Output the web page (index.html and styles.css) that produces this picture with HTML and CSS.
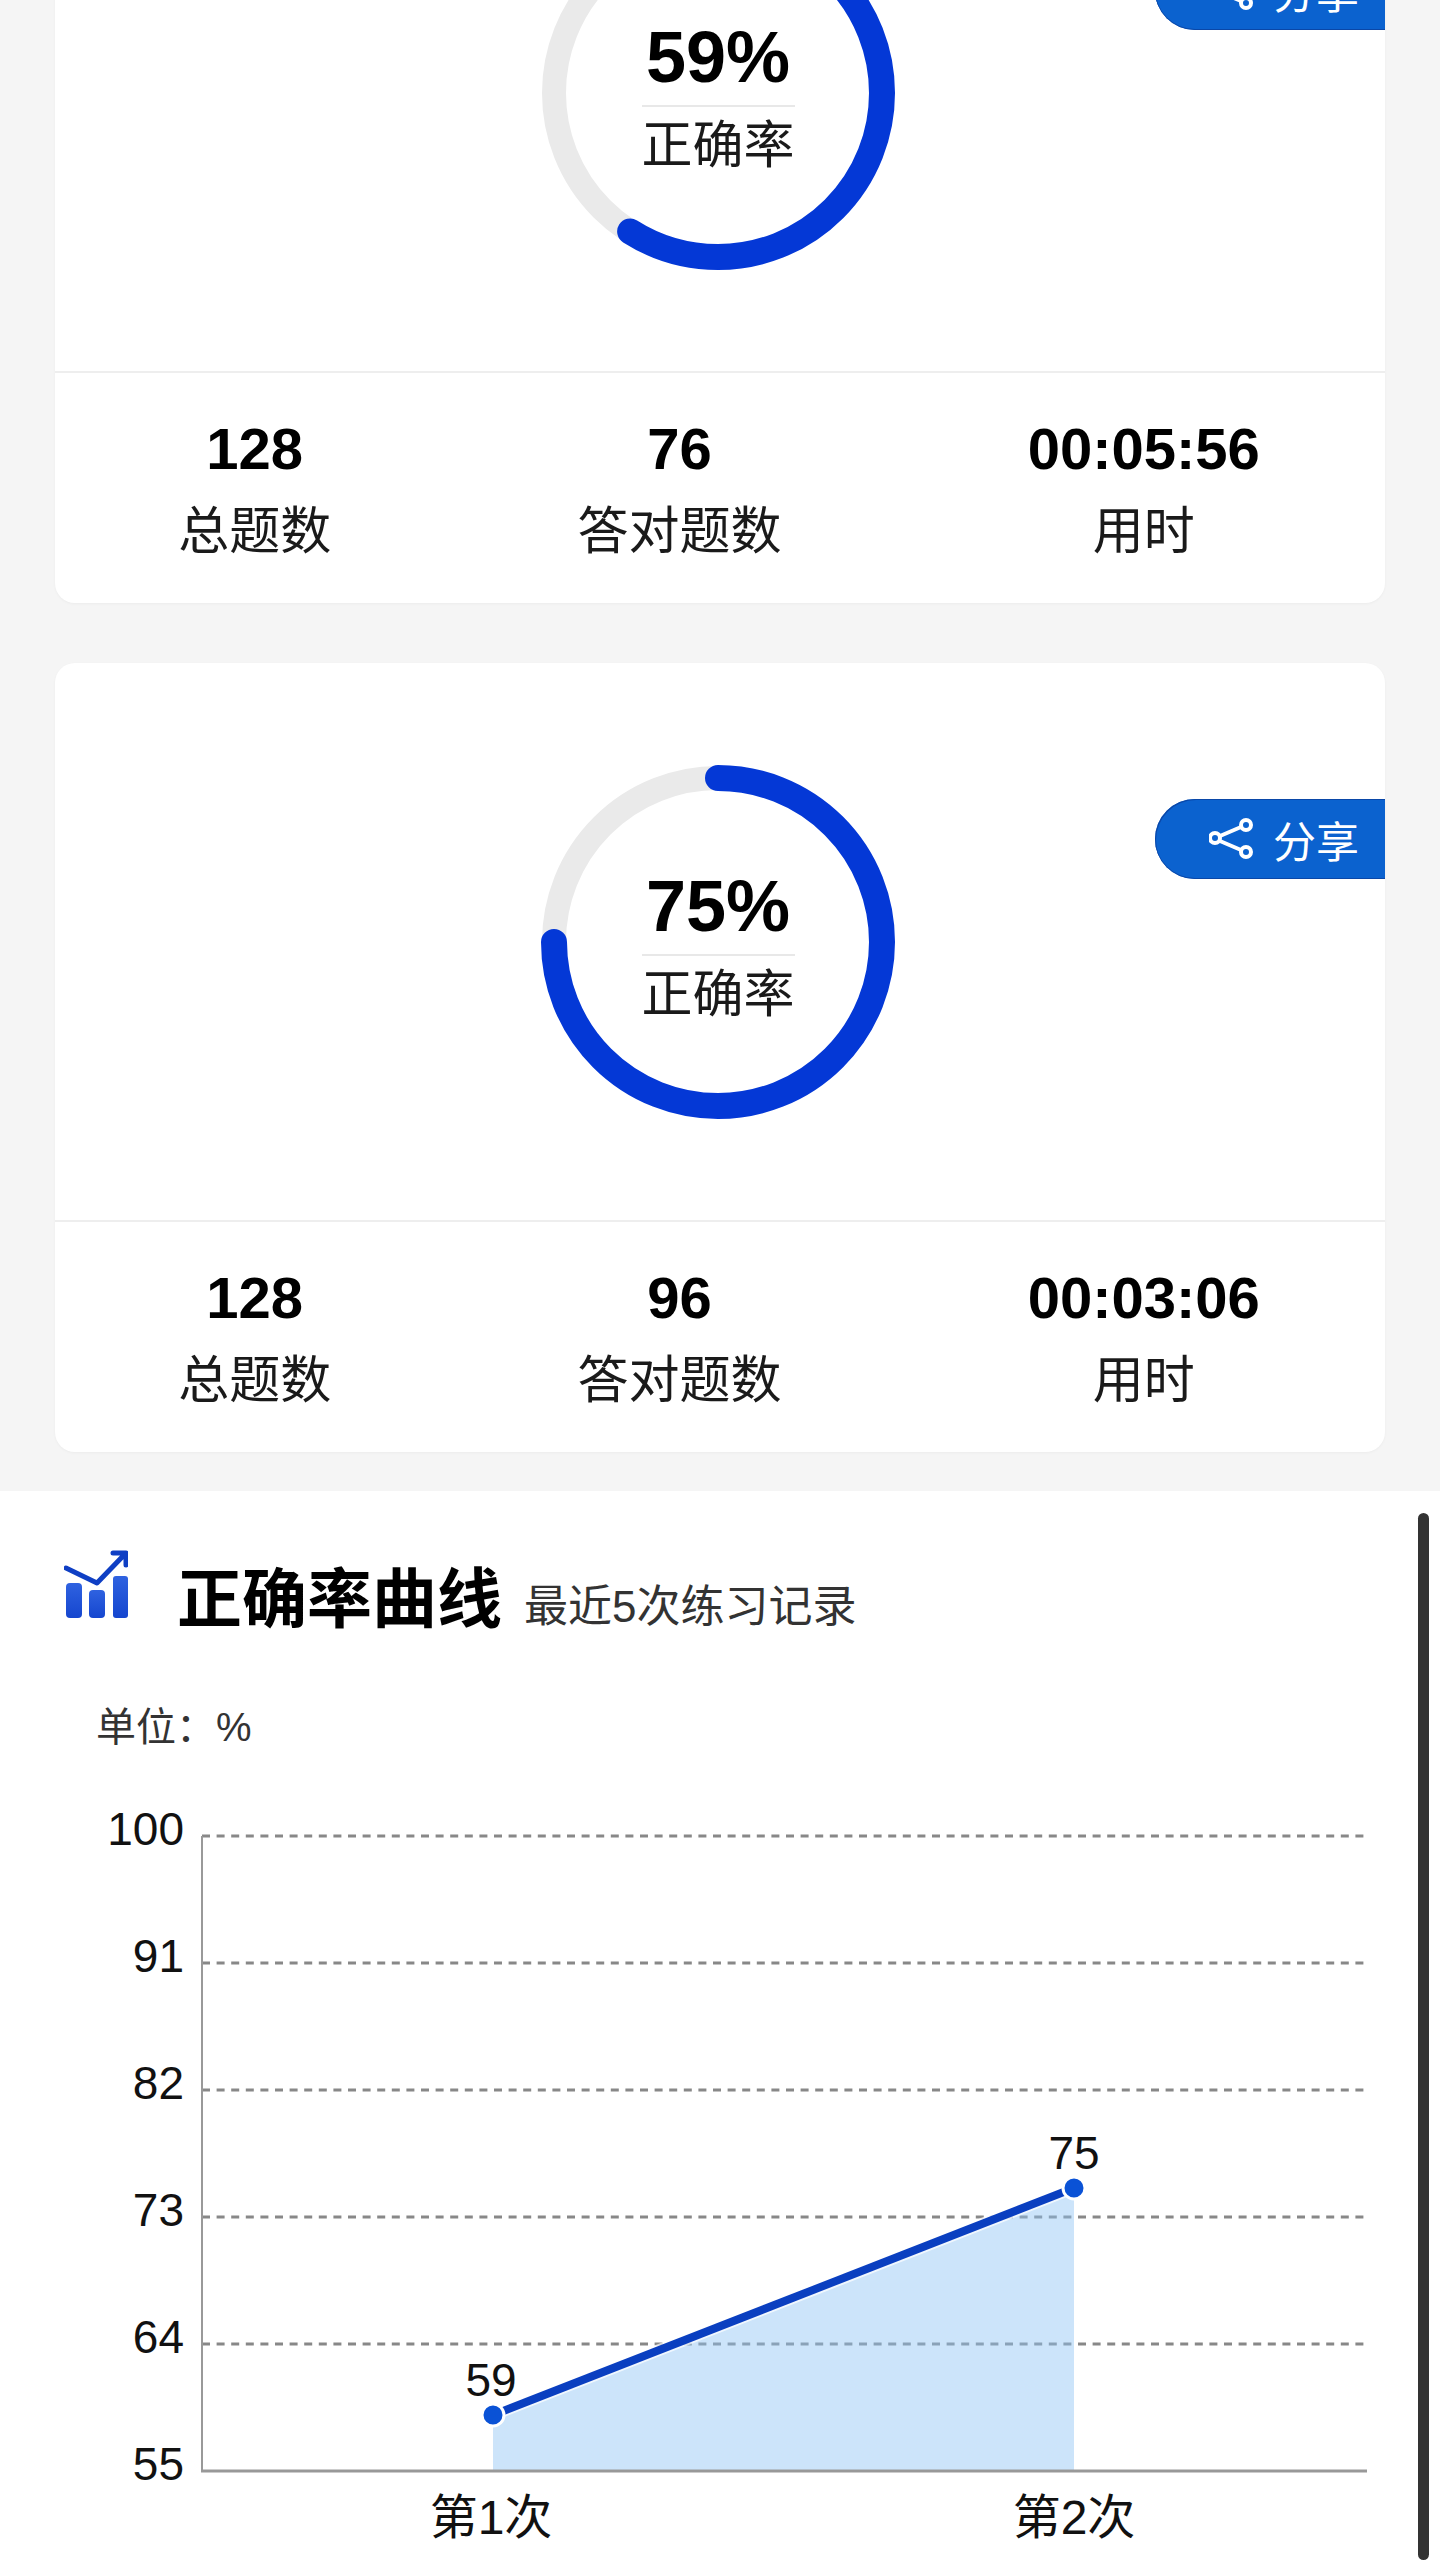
FILE: index.html
```html
<!DOCTYPE html>
<html lang="zh-CN">
<head>
    <meta charset="UTF-8">
    <title>练习结果</title>
    <link rel="stylesheet" href="styles.css">
</head>
<body>

<div class="page">
    <div class="cards">
        <div class="card">
            <div class="card-top">
                <div class="gauge">
                    <svg class="ring" width="354" height="354" viewBox="0 0 354 354">
                        <circle class="ring-bg" cx="177" cy="177" r="164"/>
                        <circle class="ring-val" cx="177" cy="177" r="164" pathLength="100" stroke-dasharray="59 100" transform="rotate(-90 177 177)"/>
                    </svg>
                    <div class="gauge-text">
                        <div class="gauge-num">59%</div>
                        <div class="gauge-label">正确率</div>
                    </div>
                </div>
                <div class="share">
                    <svg width="44" height="42" viewBox="0 0 44 42">
                        <path class="share-line" d="M11 18 32 9M11 23 32 32"/>
                        <circle class="share-dot" cx="6" cy="20" r="5"/>
                        <circle class="share-dot" cx="37" cy="7" r="5"/>
                        <circle class="share-dot" cx="37" cy="34" r="5"/>
                    </svg>
                    <span>分享</span>
                </div>
            </div>
            <div class="stats">
                <div class="stat"><div class="stat-num">128</div><div class="stat-label">总题数</div></div>
                <div class="stat"><div class="stat-num">76</div><div class="stat-label">答对题数</div></div>
                <div class="stat"><div class="stat-num">00:05:56</div><div class="stat-label">用时</div></div>
            </div>
        </div>

        <div class="card">
            <div class="card-top">
                <div class="gauge">
                    <svg class="ring" width="354" height="354" viewBox="0 0 354 354">
                        <circle class="ring-bg" cx="177" cy="177" r="164"/>
                        <circle class="ring-val" cx="177" cy="177" r="164" pathLength="100" stroke-dasharray="75 100" transform="rotate(-90 177 177)"/>
                    </svg>
                    <div class="gauge-text">
                        <div class="gauge-num">75%</div>
                        <div class="gauge-label">正确率</div>
                    </div>
                </div>
                <div class="share">
                    <svg width="44" height="42" viewBox="0 0 44 42">
                        <path class="share-line" d="M11 18 32 9M11 23 32 32"/>
                        <circle class="share-dot" cx="6" cy="20" r="5"/>
                        <circle class="share-dot" cx="37" cy="7" r="5"/>
                        <circle class="share-dot" cx="37" cy="34" r="5"/>
                    </svg>
                    <span>分享</span>
                </div>
            </div>
            <div class="stats">
                <div class="stat"><div class="stat-num">128</div><div class="stat-label">总题数</div></div>
                <div class="stat"><div class="stat-num">96</div><div class="stat-label">答对题数</div></div>
                <div class="stat"><div class="stat-num">00:03:06</div><div class="stat-label">用时</div></div>
            </div>
        </div>
    </div>

    <div class="curve">
        <div class="scrollbar"></div>
        <div class="curve-head">
            <svg class="curve-icon" width="64" height="68" viewBox="0 0 64 68">
                <defs>
                    <linearGradient id="barFill" x1="0" y1="0" x2="0" y2="1">
                        <stop offset="0" stop-color="#2f62e0"/>
                        <stop offset="1" stop-color="#1546cf"/>
                    </linearGradient>
                </defs>
                <path class="icon-arrow" d="M2 18 33 33 61 4M49 3H62V15"/>
                <rect class="icon-bar" x="2" y="33" width="16" height="35" rx="4"/>
                <rect class="icon-bar" x="25" y="40" width="16" height="28" rx="4"/>
                <rect class="icon-bar" x="49" y="26" width="15" height="42" rx="3"/>
            </svg>
            <div class="curve-title">正确率曲线</div>
            <div class="curve-sub">最近5次练习记录</div>
        </div>
        <div class="unit">单位：%</div>

        <svg class="chart" width="1440" height="770" viewBox="0 0 1440 770">
            <line class="grid" x1="202" y1="46" x2="1367" y2="46"/>
            <line class="grid" x1="202" y1="173" x2="1367" y2="173"/>
            <line class="grid" x1="202" y1="300" x2="1367" y2="300"/>
            <line class="grid" x1="202" y1="427" x2="1367" y2="427"/>
            <line class="grid" x1="202" y1="554" x2="1367" y2="554"/>
            <line class="axis-y" x1="202" y1="46" x2="202" y2="681"/>
            <polygon class="area" points="493,625 1074,398 1074,681 493,681"/>
            <line class="axis-x" x1="201" y1="681" x2="1367" y2="681"/>
            <line class="curve-halo" x1="493" y1="625" x2="1074" y2="398"/>
            <line class="curve-line" x1="493" y1="625" x2="1074" y2="398"/>
            <circle class="curve-dot" cx="493" cy="625" r="11"/>
            <circle class="curve-dot" cx="1074" cy="398" r="11"/>

            <text class="tick" x="184" y="55">100</text>
            <text class="tick" x="184" y="182">91</text>
            <text class="tick" x="184" y="309">82</text>
            <text class="tick" x="184" y="436">73</text>
            <text class="tick" x="184" y="563">64</text>
            <text class="tick" x="184" y="690">55</text>

            <text class="point-val" x="491" y="606">59</text>
            <text class="point-val" x="1074" y="379">75</text>

            <text class="x-label" x="491" y="744">第1次</text>
            <text class="x-label" x="1074" y="744">第2次</text>
        </svg>
    </div>
</div>

</body>
</html>
```

FILE: styles.css
```css
html, body {
    margin: 0;
    height: 2560px;
    overflow: hidden;
}
body {
    background-color: #f5f5f5;
    font-family: "Liberation Sans", "Noto Sans CJK SC", sans-serif;
    color: #111;
}

/* 页面已向下滚动 */
.page {
    margin-top: -186px;
}
.cards {
    padding: 0 55px 39px;
    display: flex;
    flex-direction: column;
    gap: 60px;
}
.card {
    background-color: #fff;
    border-radius: 20px;
    box-shadow: 0 1px 3px rgba(0, 0, 0, 0.04);
}
.card-top {
    position: relative;
    height: 559px;
    display: flex;
    align-items: center;
    justify-content: center;
    border-bottom: 2px solid #eee;
    box-sizing: border-box;
}

.gauge {
    position: relative;
    width: 354px;
    height: 354px;
    margin-left: -4px;
}
.ring {
    display: block;
}
.ring-bg {
    fill: none;
    stroke: #eaeaea;
    stroke-width: 24;
}
.ring-val {
    fill: none;
    stroke: #0438d6;
    stroke-width: 26;
    stroke-linecap: round;
}
.gauge-text {
    position: absolute;
    top: 14px;
    right: 0;
    bottom: 0;
    left: 0;
    display: flex;
    flex-direction: column;
    align-items: center;
    justify-content: center;
}
.gauge-num {
    font-size: 72px;
    font-weight: bold;
    line-height: 76px;
    padding-bottom: 10px;
    width: 153px;
    text-align: center;
    border-bottom: 2px solid #e8e8e8;
    color: #000;
}
.gauge-label {
    font-size: 51px;
    line-height: 70px;
    margin-top: 4px;
    color: #1a1a1a;
}

.share {
    position: absolute;
    top: 136px;
    right: 0;
    width: 230px;
    height: 80px;
    box-sizing: border-box;
    padding-left: 54px;
    display: flex;
    align-items: center;
    gap: 20px;
    background-color: #0b62cf;
    border-radius: 40px 0 0 40px;
    box-shadow: inset 1px 1px 0 #0a47a8, inset 0 -1px 0 #0a47a8;
    color: #fff;
    font-size: 43px;
}
.share-line {
    fill: none;
    stroke: #fff;
    stroke-width: 4;
}
.share-dot {
    fill: #0b62cf;
    stroke: #fff;
    stroke-width: 4;
}

.stats {
    height: 230px;
    padding: 44px 2px 0 0;
    box-sizing: border-box;
    display: flex;
    justify-content: space-around;
    text-align: center;
}
.stat-num {
    font-size: 58px;
    font-weight: bold;
    line-height: 64px;
    color: #000;
}
.stat-label {
    font-size: 51px;
    line-height: 72px;
    margin-top: 15px;
    color: #1a1a1a;
}

.curve {
    position: relative;
    background-color: #fff;
    padding-top: 59px;
    height: 1069px;
    box-sizing: border-box;
}
.scrollbar {
    position: absolute;
    top: 22px;
    right: 11px;
    bottom: 0;
    width: 11px;
    background-color: #333;
    border-radius: 6px;
}
.curve-head {
    display: flex;
    align-items: baseline;
    padding-left: 64px;
    height: 75px;
}
.curve-icon {
    align-self: flex-start;
    margin-right: 49px;
}
.curve-title {
    font-size: 65px;
    font-weight: bold;
    line-height: 75px;
    padding-top: 12px;
    color: #000;
}
.curve-sub {
    font-size: 44px;
    margin-left: 22px;
    color: #333;
}
.icon-arrow {
    fill: none;
    stroke: #0f3fc4;
    stroke-width: 5;
    stroke-linecap: round;
    stroke-linejoin: round;
}
.icon-bar {
    fill: url(#barFill);
}
.unit {
    font-size: 40px;
    line-height: 50px;
    margin: 77px 0 0 96px;
    color: #333;
}

.chart {
    display: block;
    margin-top: 38px;
}
.grid {
    stroke: #888;
    stroke-width: 3;
    stroke-dasharray: 8 6.6;
}
.axis-y {
    stroke: #999;
    stroke-width: 2;
}
.axis-x {
    stroke: #999;
    stroke-width: 3;
}
.area {
    fill: #8fc3f5;
    fill-opacity: 0.45;
}
.curve-halo {
    stroke: #fff;
    stroke-opacity: 0.7;
    stroke-width: 12;
}
.curve-line {
    stroke: #0a3fc0;
    stroke-width: 8;
}
.curve-dot {
    fill: #0a52d6;
    stroke: #fff;
    stroke-width: 3;
}
.tick, .point-val {
    font-size: 46px;
    fill: #111;
}
.x-label {
    font-size: 48px;
    fill: #111;
}
.tick {
    text-anchor: end;
}
.point-val, .x-label {
    text-anchor: middle;
}
```
